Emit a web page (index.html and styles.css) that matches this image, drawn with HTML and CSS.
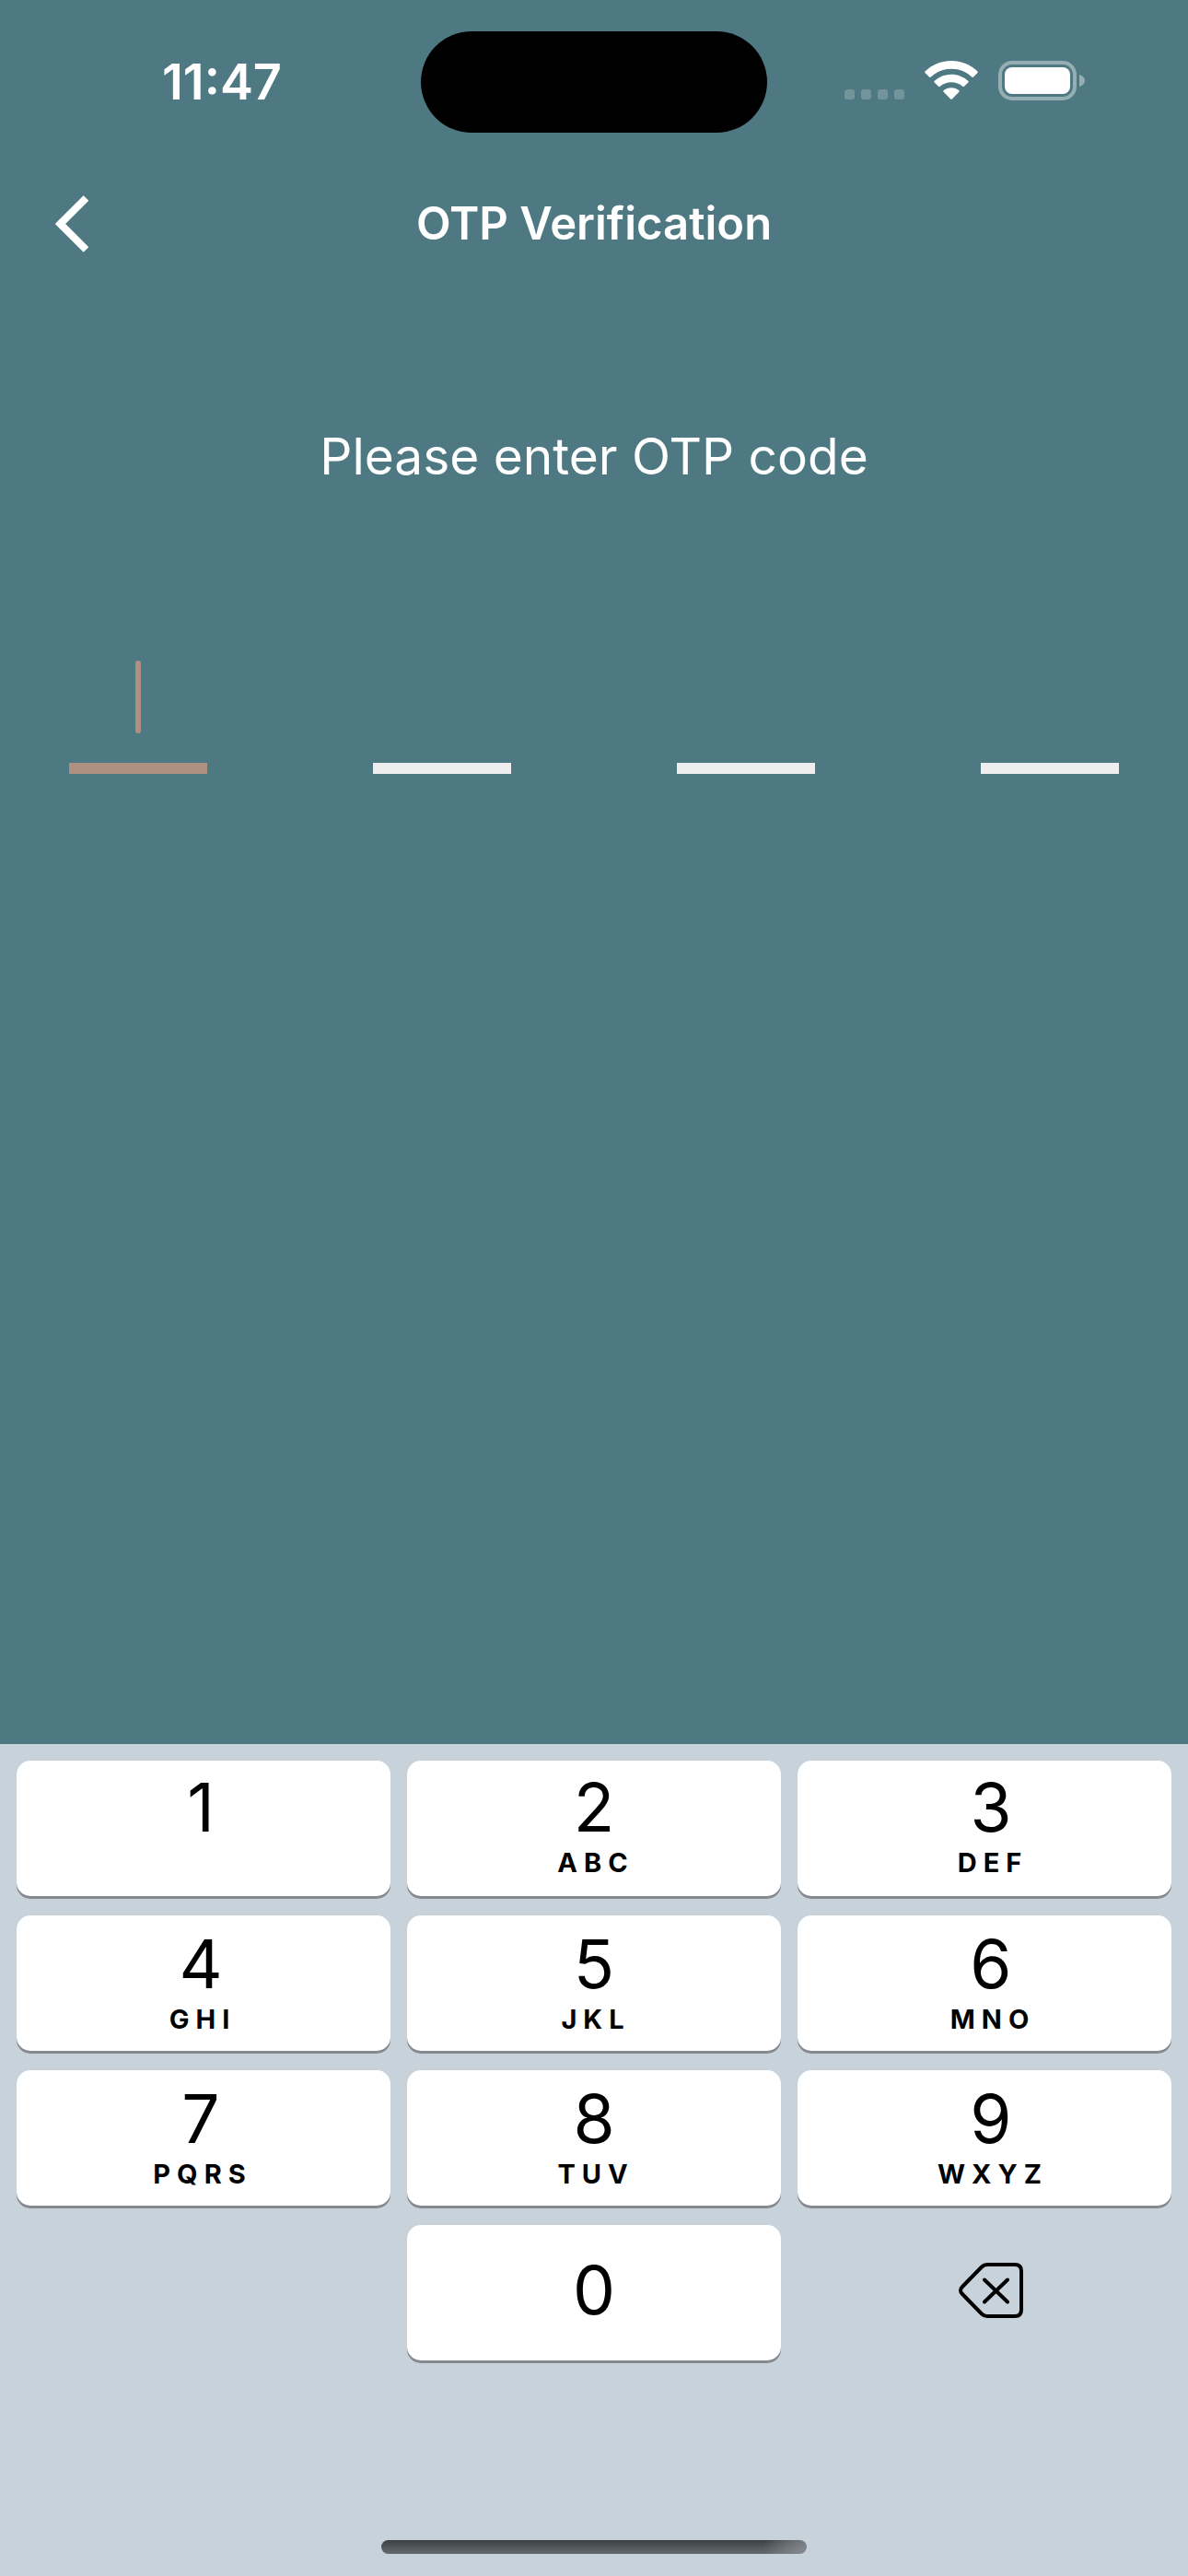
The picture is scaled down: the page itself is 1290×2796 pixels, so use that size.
FILE: index.html
```html
<!DOCTYPE html>
<html lang="en">
<head>
  <meta charset="utf-8">
  <meta name="viewport" content="width=device-width, initial-scale=1">
  <title>OTP Verification</title>
  <link rel="stylesheet" href="styles.css">
</head>
<body>
  <div class="screen">
    <div class="status-bar">
      <time class="status-time">11:47</time>
      <div class="island"></div>
      <div class="status-icons">
        <svg class="icon-cellular" width="65" height="43" viewBox="0 0 65 43" aria-hidden="true">
          <rect x="0" y="31" width="11" height="11" rx="3"/>
          <rect x="18" y="31" width="11" height="11" rx="3"/>
          <rect x="36" y="31" width="11" height="11" rx="3"/>
          <rect x="54" y="31" width="11" height="11" rx="3"/>
        </svg>
        <svg class="icon-wifi" width="58" height="43" viewBox="0 0 58 43" aria-hidden="true">
          <path d="M29 0C18.200 0 8.200 4.200 .7 11.300Q-.2 12.300 .7 13.200L5 17.600Q5.800 18.400 6.800 17.500C12.600 12 20.400 8.800 29 8.800S45.400 12 51.200 17.500Q52.200 18.400 53 17.600L57.300 13.200Q58.200 12.300 57.300 11.300C49.800 4.200 39.800 0 29 0Z"/>
          <path d="M29 14.700C22 14.700 15.700 17.400 10.800 21.700Q9.900 22.600 10.700 23.500L15 27.800Q15.800 28.600 16.800 27.800C20.100 25 24.400 23.300 29 23.300S37.900 25 41.200 27.800Q42.200 28.600 43 27.800L47.300 23.500Q48.100 22.600 47.200 21.700C42.300 17.400 36 14.700 29 14.700Z"/>
          <path d="M29 29.200C25.800 29.200 22.900 30.300 20.700 32Q19.800 32.900 20.600 33.700L28.200 41.500Q29 42.300 29.800 41.500L37.400 33.700Q38.200 32.900 37.300 32C35.100 30.300 32.200 29.200 29 29.200Z"/>
        </svg>
        <svg class="icon-battery" width="94" height="43" viewBox="0 0 94 43" aria-hidden="true">
          <rect class="battery-shell" x="2" y="2" width="81" height="39" rx="13"/>
          <path class="battery-cap" d="M88 15C91.500 16 94 18.500 94 21.500S91.500 27 88 28Z"/>
          <rect x="7" y="7" width="71" height="29" rx="8"/>
        </svg>
      </div>
    </div>

    <header class="nav-bar">
      <button class="back" type="button" aria-label="Back">
        <svg width="38" height="62" viewBox="0 0 38 62" aria-hidden="true">
          <path d="M33.500 3L5.500 31L33.500 59"/>
        </svg>
      </button>
      <h1 class="title">OTP Verification</h1>
    </header>

    <main class="content">
      <p class="prompt" id="prompt">Please enter OTP code</p>
      <form class="code" aria-labelledby="prompt">
        <div class="cell cell-active">
          <input class="cell-input" type="text" inputmode="numeric" maxlength="1" aria-label="Digit 1">
          <span class="caret"></span>
        </div>
        <div class="cell"><input class="cell-input" type="text" inputmode="numeric" maxlength="1" aria-label="Digit 2"></div>
        <div class="cell"><input class="cell-input" type="text" inputmode="numeric" maxlength="1" aria-label="Digit 3"></div>
        <div class="cell"><input class="cell-input" type="text" inputmode="numeric" maxlength="1" aria-label="Digit 4"></div>
      </form>
    </main>

    <section class="keyboard" aria-label="Number pad">
      <div class="keys">
        <button class="key key-top key-left" type="button"><span class="digit">1</span></button>
        <button class="key key-top" type="button"><span class="digit">2</span><span class="letters">ABC</span></button>
        <button class="key key-top key-right" type="button"><span class="digit">3</span><span class="letters">DEF</span></button>
        <button class="key key-left" type="button"><span class="digit">4</span><span class="letters">GHI</span></button>
        <button class="key" type="button"><span class="digit">5</span><span class="letters">JKL</span></button>
        <button class="key key-right" type="button"><span class="digit">6</span><span class="letters">MNO</span></button>
        <button class="key key-left" type="button"><span class="digit">7</span><span class="letters">PQRS</span></button>
        <button class="key" type="button"><span class="digit">8</span><span class="letters">TUV</span></button>
        <button class="key key-right" type="button"><span class="digit">9</span><span class="letters">WXYZ</span></button>
        <button class="key key-zero" type="button"><span class="digit">0</span></button>
        <button class="key key-right key-delete" type="button" aria-label="Delete">
          <svg width="70" height="60" viewBox="0 0 70 60" aria-hidden="true">
            <path d="M31 2H61Q68 2 68 9V51Q68 58 61 58H31Q27.500 58 25 55.500L4 34Q0 30 4 26L25 4.500Q27.500 2 31 2Z"/>
            <path d="M28 18.500L53 42.500M53 18.500L28 42.500"/>
          </svg>
        </button>
      </div>
      <div class="home-indicator"></div>
    </section>
  </div>
</body>
</html>
```
FILE: styles.css
```css
* {
  box-sizing: border-box;
}

body {
  margin: 0;
  font-family: Inter, "Liberation Sans", sans-serif;
  background: #4f7982;
}

button {
  margin: 0;
  border: 0;
  font: inherit;
  color: inherit;
}

.screen {
  display: flex;
  flex-direction: column;
  min-height: 100vh;
  color: #fff;
}

/* Status bar */
.status-bar {
  display: grid;
  grid-template-columns: 1fr 376px 1fr;
  align-items: center;
  padding-top: 34px;
}

.status-time {
  padding-left: 176px;
  font-size: 54px;
  line-height: 64px;
  font-weight: 600;
}

.island {
  height: 110px;
  border-radius: 55px;
  background: #000;
}

.status-icons {
  display: flex;
  justify-content: flex-end;
  gap: 22px;
  padding: 0 112px 4px 0;
  fill: #fff;
}

.icon-cellular {
  opacity: 0.2;
}

.battery-shell {
  fill: none;
  stroke: #fff;
  stroke-width: 4;
  opacity: 0.4;
}

.battery-cap {
  opacity: 0.4;
}

/* Navigation bar */
.nav-bar {
  display: grid;
  grid-template-columns: 1fr auto 1fr;
  align-items: center;
  padding: 66px 60px 33px;
}

.back {
  display: flex;
  justify-self: start;
  padding: 0;
  background: none;
}

.back svg {
  fill: none;
  stroke: #fff;
  stroke-width: 8;
}

.title {
  margin: 0;
  font-size: 49px;
  line-height: 66px;
  font-weight: 600;
}

/* Code entry */
.content {
  flex: 1;
  padding: 150px 75px 0;
}

.prompt {
  margin: 0;
  font-size: 55px;
  line-height: 72px;
  text-align: center;
}

.code {
  display: flex;
  justify-content: space-between;
  margin-top: 153px;
}

.cell {
  position: relative;
  width: 150px;
  border-bottom: 12px solid #eee;
}

.cell-active {
  border-color: #b09080;
}

.cell-input {
  display: block;
  width: 100%;
  height: 144px;
  padding: 0;
  border: 0;
  outline: 0;
  background: none;
  color: #fff;
  font: inherit;
  font-size: 55px;
  text-align: center;
}

.caret {
  position: absolute;
  bottom: 32px;
  left: 50%;
  width: 6px;
  height: 79px;
  margin-left: -3px;
  border-radius: 3px;
  background: #b09080;
}

/* Number pad */
.keyboard {
  padding: 18px 18px 24px;
  background: #c8d2da;
  color: #000;
}

.keys {
  display: grid;
  grid-template-columns: repeat(3, 1fr);
  gap: 21px 18px;
}

.key {
  display: flex;
  flex-direction: column;
  align-items: center;
  height: 147px;
  padding: 12px 0 0;
  border-radius: 15px;
  background: #fff;
  box-shadow: 0 3px 0 #83898e;
}

.key-top {
  padding-top: 10px;
}

.key-left {
  padding-right: 6px;
}

.key-right {
  padding-left: 14px;
}

.key-zero {
  grid-column: 2;
  justify-content: center;
  padding: 0 0 6px;
}

.key-delete {
  justify-content: center;
  padding-top: 0;
  padding-bottom: 6px;
  background: none;
  box-shadow: none;
}

.key-delete svg {
  fill: none;
  stroke: #000;
  stroke-width: 4;
  stroke-linecap: round;
  stroke-linejoin: round;
}

.digit {
  font-size: 73px;
  line-height: 82px;
}

.letters {
  padding-left: 4px;
  font-size: 29px;
  line-height: 38px;
  font-weight: 700;
  letter-spacing: 7px;
}

.home-indicator {
  width: 462px;
  height: 15px;
  margin: 195px auto 0;
  border-radius: 8px;
  background:
    radial-gradient(circle at 100% 100%, #868c91, transparent 48px),
    linear-gradient(#3c4144, #646a6f);
}
```
